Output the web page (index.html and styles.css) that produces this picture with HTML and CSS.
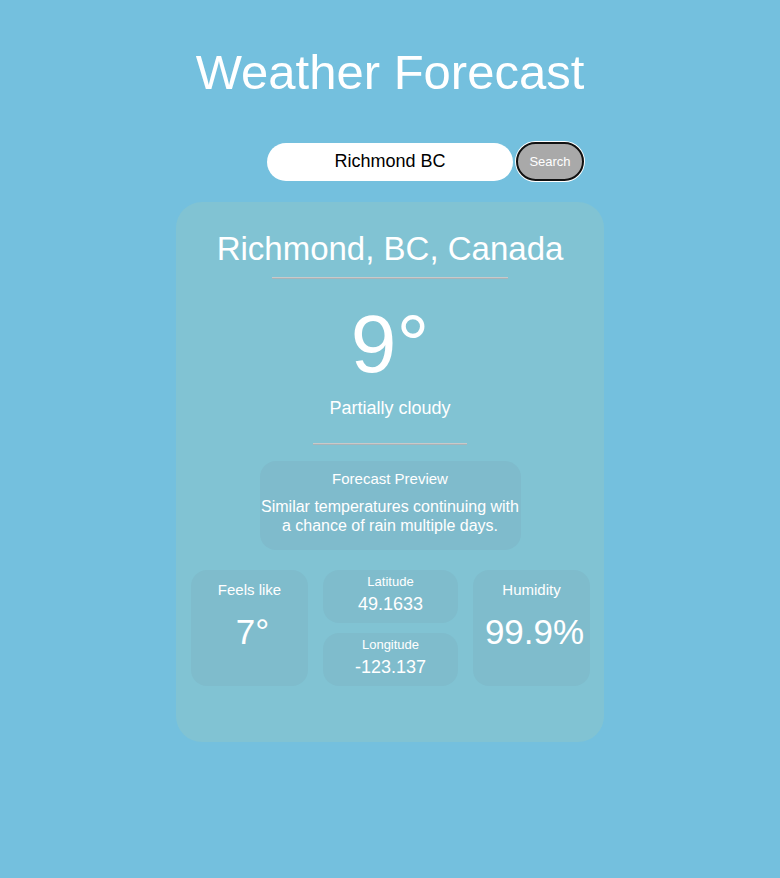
FILE: index.html
```html
<!DOCTYPE html>
<html>
<head>
<meta charset="utf-8">
<link rel="stylesheet" href="styles.css">
</head>
<body>
<h1 class="title">Weather Forecast</h1>
<form class="search">
  <span></span>
  <input class="search-input" type="text" value="Richmond BC">
  <button class="search-btn" type="button">Search</button>
</form>
<main class="card">
  <h2 class="city">Richmond, BC, Canada</h2>
  <div class="rule rule-wide"></div>
  <div class="temp">9°</div>
  <div class="cond">Partially cloudy</div>
  <div class="rule rule-short"></div>
  <section class="preview">
    <div class="preview-title">Forecast Preview</div>
    <div class="preview-text">Similar temperatures continuing with a chance of rain multiple days.</div>
  </section>
  <section class="stats">
    <div class="box big">
      <div class="label">Feels like</div>
      <div class="big-value">7°</div>
    </div>
    <div class="coords">
      <div class="box small">
        <div class="small-label">Latitude</div>
        <div class="small-value">49.1633</div>
      </div>
      <div class="box small">
        <div class="small-label">Longitude</div>
        <div class="small-value">-123.137</div>
      </div>
    </div>
    <div class="box big">
      <div class="label">Humidity</div>
      <div class="big-value">99.9%</div>
    </div>
  </section>
</main>
</body>
</html>
```
FILE: styles.css
```css
html, body {
  margin: 0;
  padding: 0;
}
body {
  background: #74c0de;
  font-family: "Liberation Sans", Arial, sans-serif;
  color: #ffffff;
  height: 878px;
}
.title {
  margin: 0;
  padding-top: 44px;
  font-size: 49px;
  font-weight: normal;
  line-height: 56px;
  text-align: center;
}
.search {
  margin: 42px 0 0;
  display: grid;
  grid-template-columns: 1fr 246px 1fr;
  align-items: center;
}
.search-input {
  box-sizing: border-box;
  width: 246px;
  height: 38px;
  border: none;
  border-radius: 19px;
  background: #ffffff;
  text-align: center;
  font-family: "Liberation Sans", Arial, sans-serif;
  font-size: 18px;
  color: #000000;
  padding: 0;
  outline: none;
}
.search-btn {
  justify-self: start;
  margin-left: 3px;
  box-sizing: border-box;
  width: 68px;
  height: 39px;
  border: 2px solid #111111;
  border-radius: 20px;
  background: #a9a9a9;
  color: #ffffff;
  font-family: "Liberation Sans", Arial, sans-serif;
  font-size: 13px;
  box-shadow: 0 0 0 1px #ffffff;
  padding: 0;
}
.card {
  box-sizing: border-box;
  width: 428px;
  height: 540px;
  margin: 21px auto 0;
  background: #81c3d3;
  border-radius: 26px;
  padding: 28px 15px 0;
  display: flex;
  flex-direction: column;
  align-items: center;
}
.city {
  margin: 0;
  font-size: 33px;
  font-weight: normal;
  line-height: 38px;
}
.rule {
  height: 1px;
  background: #c9c9c9;
  border-bottom: 1px solid #a7b3b8;
}
.rule-wide {
  width: 236px;
  margin-top: 9px;
}
.temp {
  margin-top: 24px;
  font-size: 82px;
  line-height: 82px;
}
.cond {
  margin-top: 13px;
  font-size: 18px;
  line-height: 21px;
}
.rule-short {
  width: 154px;
  margin-top: 24px;
}
.preview {
  box-sizing: border-box;
  width: 261px;
  height: 89px;
  margin-top: 16px;
  background: #7fbbcc;
  border-radius: 16px;
  text-align: center;
  padding-top: 9px;
}
.preview-title {
  font-size: 15px;
  line-height: 18px;
}
.preview-text {
  margin-top: 9px;
  font-size: 16px;
  line-height: 19px;
  margin-left: -2px;
  margin-right: -2px;
}
.stats {
  margin-top: 20px;
  display: grid;
  grid-template-columns: 117px 135px 117px;
  column-gap: 15px;
  width: 398px;
}
.box {
  background: #7fbccc;
  border-radius: 16px;
  text-align: center;
  box-sizing: border-box;
}
.big {
  height: 116px;
  padding-top: 11px;
}
.label {
  font-size: 15px;
  line-height: 18px;
}
.big-value {
  margin-top: 13px;
  padding-left: 6px;
  font-size: 35px;
  line-height: 40px;
}
.coords {
  display: flex;
  flex-direction: column;
  gap: 10px;
}
.small {
  height: 53px;
  padding-top: 4px;
}
.small-label {
  font-size: 13px;
  line-height: 15px;
}
.small-value {
  margin-top: 5px;
  font-size: 18px;
  line-height: 21px;
}
```
